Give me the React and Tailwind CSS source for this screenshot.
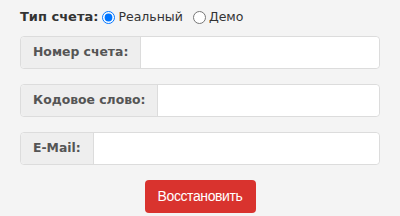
export default function App() {
  const fields = ['Номер счета:', 'Кодовое слово:', 'E-Mail:']

  return (
    <div className="w-[400px] h-[216px] bg-[#f4f4f4] px-5 pt-[7px] text-[13px] text-[#333]" style={{ fontFamily: '"DejaVu Sans", Verdana, sans-serif' }}>
      {/* account type */}
      <div className="flex items-center h-[20px]">
        <span className="font-bold mr-[4px]">Тип счета:</span>
        <label className="flex items-center mr-[10px] text-[12.5px]">
          <input type="radio" name="type" defaultChecked className="w-[13px] h-[13px] m-0 mr-[3px] accent-[#0075ff]" />
          Реальный
        </label>
        <label className="flex items-center text-[12.5px]">
          <input type="radio" name="type" className="w-[13px] h-[13px] m-0 mr-[3px]" />
          Демо
        </label>
      </div>

      <div className="flex flex-col gap-[15px] mt-[9px]">
        {fields.map(f => (
          <div key={f} className="flex h-[33px] rounded border border-[#dcdcdc] bg-white">
            <span className="flex items-center px-3 bg-[#eeeeee] border-r border-[#dcdcdc] rounded-l font-bold text-[12.4px] text-[#555] whitespace-nowrap">
              {f}
            </span>
            <input className="flex-1 min-w-0 bg-white rounded-r outline-none px-2" />
          </div>
        ))}
      </div>

      <div className="flex justify-center mt-[15px]">
        <button className="w-[111px] h-[33px] rounded bg-[#d9332e] text-white text-[14px] tracking-[-0.4px]" style={{ fontFamily: '"Liberation Sans", Arial, sans-serif' }}>
          Восстановить
        </button>
      </div>
    </div>
  )
}
